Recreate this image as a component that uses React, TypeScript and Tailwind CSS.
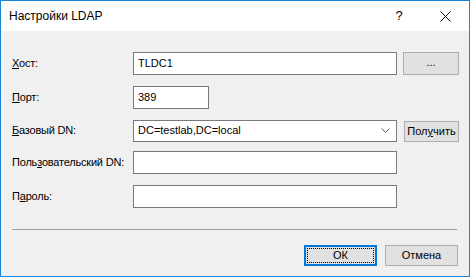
const Field = ({ value, width = "w-[264px]" }: { value?: string; width?: string }) => (
  <div className={`${width} h-[23px] border border-[#7a7a7a] bg-white flex items-center pl-[4px] text-black`}>
    {value}
  </div>
);

const Label = ({ children }: { children: React.ReactNode }) => (
  <div className="w-[121px] shrink-0 whitespace-nowrap tracking-[-0.2px]">{children}</div>
);

export default function App() {
  return (
    <div
      className="w-[470px] h-[277px] border border-[#1883d7] bg-[#f0f0f0] flex flex-col text-[11px] text-black"
      style={{ fontFamily: '"Liberation Sans", Arial, sans-serif' }}
    >
      {/* title bar */}
      <div className="h-[30px] bg-white flex items-center pl-[8px]">
        <span className="flex-1 text-[12px]">Настройки LDAP</span>
        <span className="w-[46px] text-center text-[13px] mr-[1px]">?</span>
        <div className="w-[46px] flex justify-center pr-[1px]">
          <svg width="11" height="11" viewBox="0 0 11 11">
            <path d="M0.5 0.5 L10.5 10.5 M10.5 0.5 L0.5 10.5" stroke="#111" strokeWidth="1" />
          </svg>
        </div>
      </div>

      {/* form */}
      <div className="flex flex-col pl-[11px] pt-[21px]">
        <div className="flex items-center">
          <Label>
            <u>Х</u>ост:
          </Label>
          <Field value="TLDC1" />
          <button className="ml-[6px] w-[56px] h-[23px] border border-[#adadad] bg-[#e1e1e1] leading-none pb-[3px]">
            ...
          </button>
        </div>

        <div className="flex items-center mt-[11px]">
          <Label>
            <u>П</u>орт:
          </Label>
          <Field value="389" width="w-[76px]" />
        </div>

        <div className="flex items-center mt-[10px]">
          <Label>
            <u>Б</u>азовый DN:
          </Label>
          <div className="w-[264px] h-[22px] border border-[#7a7a7a] bg-white flex items-center pl-[4px] pr-[6px]">
            <span className="flex-1">DC=testlab,DC=local</span>
            <svg width="9" height="5" viewBox="0 0 9 5">
              <path d="M0.5 0.5 L4.5 4.5 L8.5 0.5" stroke="#606060" fill="none" strokeWidth="1" />
            </svg>
          </div>
          <button className="ml-[7px] mt-[2px] w-[55px] h-[21px] border border-[#adadad] bg-[#e1e1e1] flex items-center justify-center whitespace-nowrap">
            Пол<u>у</u>чить
          </button>
        </div>

        <div className="flex items-center mt-[9px]">
          <Label>
            Поль<u>з</u>овательский DN:
          </Label>
          <Field />
        </div>

        <div className="flex items-center mt-[11px]">
          <Label>
            П<u>а</u>роль:
          </Label>
          <Field />
        </div>

        <div className="mt-[21px] w-[445px] h-[1px] bg-[#a0a0a0]" />

        <div className="flex justify-end gap-[8px] mt-[15px] pr-[11px]">
          <button className="w-[73px] h-[21px] border-2 border-[#0078d7] bg-[#e1e1e1] p-[1px]">
            <div className="w-full h-full border border-dotted border-black flex items-center justify-center">
              ОК
            </div>
          </button>
          <button className="w-[73px] h-[21px] border border-[#adadad] bg-[#e1e1e1] flex items-center justify-center">
            Отмена
          </button>
        </div>
      </div>
    </div>
  );
}
